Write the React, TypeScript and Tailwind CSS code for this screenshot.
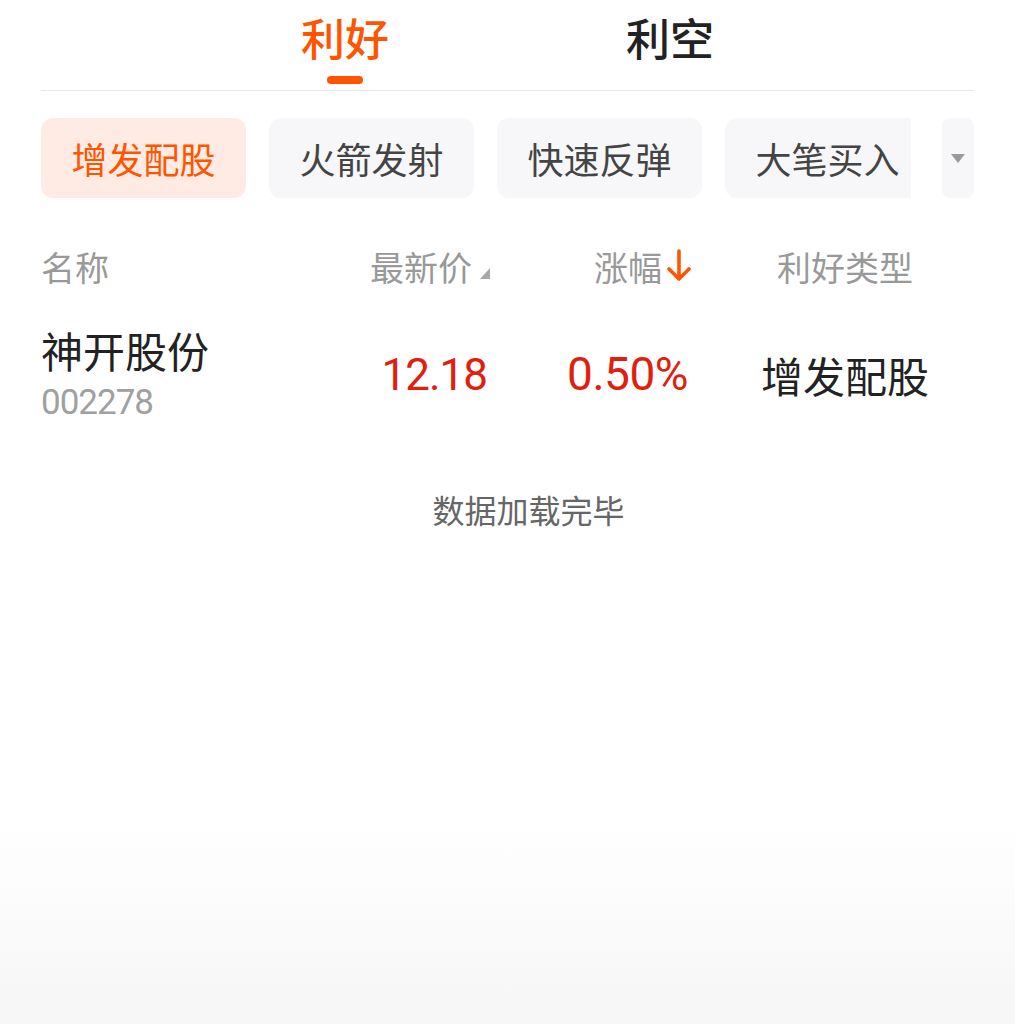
import React from "react"

const chips = ["增发配股", "火箭发射", "快速反弹", "大笔买入"]

function SortCorner() {
  return (
    <svg width="10" height="11" viewBox="0 0 10 11" className="ml-[8px] mt-[14px]">
      <polygon points="10,0 10,11 0,11" fill="#a8a8a8" />
    </svg>
  )
}

function DownArrow() {
  return (
    <svg width="26" height="34" viewBox="0 0 26 34" className="ml-[4px]">
      <path d="M13 2 V30 M3 20 L13 30 L23 20" stroke="#ff5500" strokeWidth="3.6" fill="none" strokeLinecap="round" strokeLinejoin="round" />
    </svg>
  )
}

export default function App() {
  return (
    <div className="h-[1024px] w-full bg-[linear-gradient(to_bottom,#ffffff_80%,#f6f6f6)] font-['Noto_Sans_CJK_SC',sans-serif]">
      <div className="px-[41px]">
        {/* tabs */}
        <div className="flex justify-center gap-[165px] border-b border-[#e8e8e8]">
          <div className="w-[160px] flex flex-col items-center pt-[8px] pb-[6px]">
            <span className="text-[44px] leading-[58px] font-medium text-[#ff5500]">利好</span>
            <div className="mt-[10px] h-[8px] w-[36px] rounded-full bg-[#ff5500]" />
          </div>
          <div className="w-[160px] flex flex-col items-center pt-[8px] pb-[6px]">
            <span className="text-[44px] leading-[58px] font-medium text-[#222]">利空</span>
            <div className="mt-[10px] h-[8px] w-[36px]" />
          </div>
        </div>

        {/* category chips */}
        <div className="mt-[27px] flex items-center">
          <div className="w-[870px] overflow-hidden">
            <div className="flex gap-[23px]">
              {chips.map((c, i) => (
                <div
                  key={c}
                  className={
                    i === 0
                      ? "shrink-0 w-[205px] h-[80px] rounded-[12px] bg-[#ffebe3] text-[#ff5500] flex items-center justify-center text-[36px]"
                      : "shrink-0 w-[205px] h-[80px] rounded-[12px] bg-[#f7f7f9] text-[#444] flex items-center justify-center text-[36px]"
                  }
                >
                  {c}
                </div>
              ))}
            </div>
          </div>
          <div className="ml-auto w-[32px] h-[80px] rounded-[8px] bg-[#f7f7f9] flex items-center justify-center">
            <svg width="14" height="9" viewBox="0 0 14 9">
              <polygon points="0,0 14,0 7,9" fill="#9a9a9a" />
            </svg>
          </div>
        </div>

        {/* header */}
        <div className="mt-[35px] h-[66px] flex items-center text-[34px] text-[#999]">
          <div className="w-[249px]">名称</div>
          <div className="w-[200px] flex justify-end items-center">
            <span>最新价</span>
            <SortCorner />
          </div>
          <div className="w-[202px] flex justify-end items-center">
            <span>涨幅</span>
            <DownArrow />
          </div>
          <div className="ml-[24px] w-[258px] text-center">利好类型</div>
        </div>

        {/* row */}
        <div className="pt-[24px] flex items-center">
          <div className="w-[249px] flex flex-col">
            <span className="text-[42px] leading-[54px] text-[#222]">神开股份</span>
            <span className="mt-[3px] text-[35px] leading-[46px] text-[#a0a0a0] font-['Roboto',sans-serif] tracking-[-1px]">002278</span>
          </div>
          <div className="w-[200px] text-right pr-[3px] text-[44px] text-[#e0200f] font-['Roboto',sans-serif] tracking-[-1px]">
            12.18
          </div>
          <div className="w-[202px] text-right pr-[4px] text-[46px] text-[#e0200f] font-['Roboto',sans-serif] tracking-[-0.5px]">
            0.50%
          </div>
          <div className="ml-[24px] w-[258px] text-center text-[42px] text-[#222]">增发配股</div>
        </div>

        {/* footer */}
        <div className="mt-[63px] pl-[42px] text-center text-[32px] leading-[40px] text-[#666]">数据加载完毕</div>
      </div>
    </div>
  )
}
